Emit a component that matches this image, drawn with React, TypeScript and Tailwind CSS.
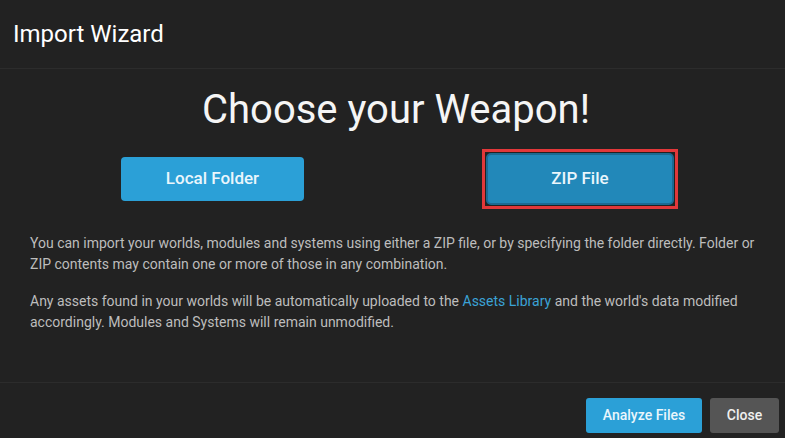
export default function App() {
  return (
    <div
      className="w-[785px] h-[438px] bg-[#222222] flex flex-col overflow-hidden"
      style={{ fontFamily: "Roboto, 'Liberation Sans', sans-serif" }}
    >
      {/* header */}
      <div className="h-[69px] shrink-0 border-b border-[#2c2c2c] px-[13px] flex items-center">
        <h2 className="text-[24px] text-white leading-none">Import Wizard</h2>
      </div>

      {/* body */}
      <div className="flex-1 px-[30px]">
        <h1 className="mt-[21px] pl-[7px] text-center text-[40px] leading-none text-[#f5f5f5]">
          Choose your Weapon!
        </h1>

        <div className="mt-[19px] flex items-center pl-[91px]">
          <button className="w-[183px] h-[44px] rounded-[4px] bg-[#2ba0d7] text-[17px] font-medium text-[#eaf6fc]">
            Local Folder
          </button>
          <div className="ml-[178px] border-[3px] border-[#e2383a] p-px">
            <button className="w-[188px] h-[52px] rounded-[5px] border-2 border-[#1d6a92] bg-[#2288b9] text-[17px] font-medium text-[#eaf6fc]">
              ZIP File
            </button>
          </div>
        </div>

        <p className="mt-[24px] text-[14px] leading-[21px] text-[#bdbdbd]">
          You can import your worlds, modules and systems using either a ZIP file, or by specifying the folder
          directly. Folder or ZIP contents may contain one or more of those in any combination.
        </p>
        <p className="mt-[16px] text-[14px] leading-[21px] text-[#bdbdbd]">
          Any assets found in your worlds will be automatically uploaded to the{" "}
          <span className="text-[#3ba3d6]">Assets Library</span> and the world's data modified accordingly.
          Modules and Systems will remain unmodified.
        </p>
      </div>

      {/* footer */}
      <div className="h-[56px] shrink-0 border-t border-[#2c2c2c] pt-[15px] pr-[6px] flex justify-end gap-2">
        <button className="w-[116px] h-[35px] rounded-[3px] bg-[#2ba0d7] text-[14px] font-medium text-[#eaf6fc]">
          Analyze Files
        </button>
        <button className="w-[69px] h-[35px] rounded-[3px] bg-[#555555] text-[14px] font-medium text-[#f0f0f0]">
          Close
        </button>
      </div>
    </div>
  );
}
